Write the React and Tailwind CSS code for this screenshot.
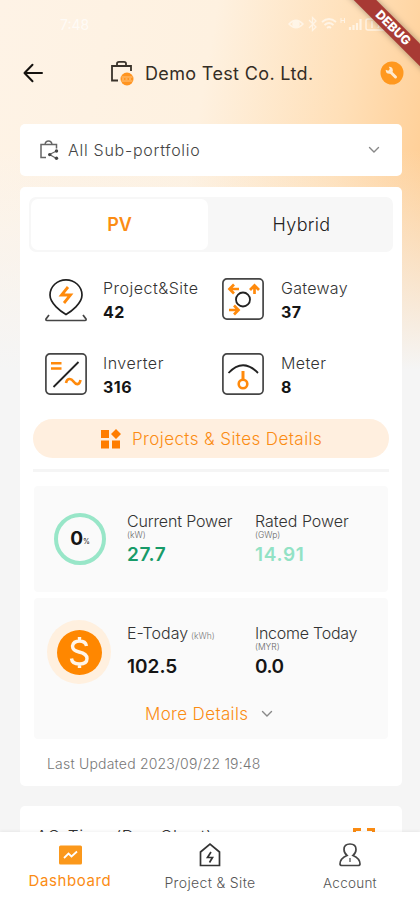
import React from "react";

const ORANGE = "#fb8c13";

function BackArrow() {
  return (
    <svg width="20" height="20" viewBox="0 0 20 20" fill="none" stroke="#15120f" strokeWidth="2" strokeLinecap="round" strokeLinejoin="round">
      <path d="M19 10H2M9.5 1.8 1.5 10l8 8.2" />
    </svg>
  );
}

function CompanyIcon() {
  return (
    <svg width="24" height="26" viewBox="0 0 24 26" fill="none">
      <path d="M8 20.5H2V6h19v5M7 6V3.6Q7 1.8 9 1.8h5q2 0 2 1.8V6" stroke="#3a332b" strokeWidth="1.8" />
      <circle cx="17" cy="19" r="6.5" fill="#ff9420" />
      <path d="M11.500 17h11M11.500 21h11" stroke="#ffc98a" strokeWidth=".9" />
      <path d="M12 19h10" stroke="#ffc98a" strokeWidth="1" strokeDasharray="2 1.500" />
    </svg>
  );
}

function PortfolioIcon() {
  return (
    <svg width="20" height="22" viewBox="0 0 20 22" fill="none" stroke="#666" strokeWidth="1.5">
      <path d="M7 18.500H2V5.500h15.500v4M6 5.500Q6.500 2 9.500 2t3.500 3.500" />
      <path d="m17.500 12-7 3.500 7 4" strokeWidth="1.200" />
      <g fill="#444" stroke="none">
        <circle cx="17.500" cy="12" r="1.700" />
        <circle cx="10.700" cy="15.600" r="1.700" />
        <circle cx="17.500" cy="19.300" r="1.700" />
      </g>
    </svg>
  );
}

function Chevron() {
  return (
    <svg width="12" height="8" viewBox="0 0 12 8" fill="none" stroke="#888" strokeWidth="1.4" strokeLinecap="round">
      <path d="m1.500 1.500 4.500 4.500 4.500-4.500" />
    </svg>
  );
}

function WrenchBadge() {
  return (
    <svg width="24" height="24" viewBox="0 0 24 24">
      <circle cx="12" cy="12" r="11.500" fill="#ff981f" />
      <path d="m10.500 11 5 5" stroke="#ffe9cd" strokeWidth="3" strokeLinecap="round" />
      <circle cx="9.300" cy="9.300" r="3.500" fill="#ffe9cd" />
      <path d="M5 5 8 4l1.800 4-1.500 1.800L4 8z" fill="#ff981f" />
    </svg>
  );
}

function StatusIcons() {
  return (
    <svg width="112" height="18" viewBox="0 0 112 18" fill="none" stroke="#fffaf2" strokeWidth="1.500" opacity=".75">
      <path d="M1 9Q8 1.500 15 9 8 16.500 1 9z" />
      <circle cx="8" cy="9" r="3" fill="#fffaf2" />
      <path d="m21 5 7 7-3.500 3.500V2.500L28 6l-7 7" strokeWidth="1.300" />
      <path d="M34 7q7-6 14 0M36.500 10q4.500-4 9 0M39 13q2-2 4 0" strokeWidth="1.800" />
      <path d="M53 3v5M56.500 3v5M53 5.500h3.500" strokeWidth="1" />
      <path d="M62 15v-3M65.500 15v-5M69 15V8M72.500 15V4" strokeWidth="2.200" />
      <rect x="78" y="4" width="26" height="11" rx="2" />
      <path d="M106 8v3M84 6v7M88 6h5l-3 7M97 6v7" />
    </svg>
  );
}

function SiteIcon() {
  return (
    <svg width="44" height="46" viewBox="0 0 44 46" fill="none">
      <path d="M22 36.500C17 33.500 6 25.500 6 17a16 15.200 0 0 1 32 0c0 8.500-11 16.500-16 19.500z" stroke="#202020" strokeWidth="1.700" />
      <path d="M5 37 2 41q-.5 1.500 1 1.500h38q1.500 0 1-1.500l-3-4" stroke="#454545" strokeWidth="1.700" />
      <path d="m24 9-6.500 8h9L20 25" stroke="#ff8a0c" strokeWidth="2.800" />
    </svg>
  );
}

function IconBox({ children }) {
  return (
    <svg width="42" height="42" viewBox="0 0 42 42" fill="none">
      <rect x=".9" y=".9" width="40.200" height="40.200" rx="4" stroke="#454545" strokeWidth="1.700" />
      {children}
    </svg>
  );
}

function GatewayIcon() {
  return (
    <IconBox>
      <circle cx="21" cy="21.500" r="7" stroke="#222" strokeWidth="1.800" />
      <g stroke="#ff8a0c" strokeWidth="2.700">
        <path d="M17 11H8M12 6.500 7.500 11l4.500 4.500M32.500 16V7.500M28 12l4.500-4.500L37 12M7 32h9M12 27.500l4.500 4.500-4.500 4.500" />
      </g>
    </IconBox>
  );
}

function InverterIcon() {
  return (
    <IconBox>
      <path d="M8.500 34 33.500 9" stroke="#222" strokeWidth="1.800" />
      <path d="M6 10.300h10.500M6 15.500h10.500" stroke="#ff8a0c" strokeWidth="2.400" />
      <path d="M21 30c1-5 5-5 7.500-1.500s6 4 7-1.500" stroke="#ff8a0c" strokeWidth="2.600" />
    </IconBox>
  );
}

function MeterIcon() {
  return (
    <IconBox>
      <path d="M6.500 20q14.500-15.500 29.500 0" stroke="#222" strokeWidth="1.800" />
      <path d="M21 18v9" stroke="#ff8a0c" strokeWidth="3" />
      <circle cx="21" cy="31" r="4.300" stroke="#ff8a0c" strokeWidth="2.600" />
    </IconBox>
  );
}

function Stat({ icon, label, value, labelClass }) {
  return (
    <div className="flex h-[75px] items-start">
      <div className="flex h-[44px] w-[44px] shrink-0 items-start justify-center">{icon}</div>
      <div className={"whitespace-nowrap " + labelClass}>
        <div className="h-[22px] text-[16px] leading-[21px] font-light text-[#333]">{label}</div>
        <div className="h-[24px] text-[16px] leading-[25px] font-bold text-[#151515]">{value}</div>
      </div>
    </div>
  );
}

function Metric({ label, unit, value, color, labelClass, inline }) {
  return (
    <div className="whitespace-nowrap">
      <div className={"h-[20px] text-[16px] leading-[20px] font-light text-[#333] " + labelClass}>
        {label}
        {inline && <span className="ml-[3px] text-[8.5px] tracking-normal text-[#777]">{unit}</span>}
      </div>
      <div className="h-[9px] text-[8.5px] leading-[8px] font-light text-[#666]">{inline ? "" : unit}</div>
      <div className={"pt-px text-[19px] leading-[28px] font-semibold " + color}>{value}</div>
    </div>
  );
}

export default function App() {
  return (
    <div className="relative flex h-[900px] w-[420px] flex-col overflow-hidden bg-[linear-gradient(to_bottom,transparent_0px,transparent_150px,#f5f5f5_370px),linear-gradient(100deg,#fef3e6_0%,#fef1e0_45%,#ffdfb7_75%,#ffc583_105%)] bg-[length:100%_100%,100%_370px] bg-no-repeat font-['Inter','Liberation_Sans',sans-serif]">
      <div className="flex h-[48px] shrink-0 items-center justify-between pl-[60px] pr-[20px] text-[14px] text-white/70">
        <span>7:48</span>
        <StatusIcons />
      </div>

      <header className="flex h-[50px] shrink-0 items-center pl-[23px] pr-[16px]">
        <BackArrow />
        <div className="ml-[67px]"><CompanyIcon /></div>
        <h1 className="ml-[11px] whitespace-nowrap pt-px text-[18px] tracking-[.35px] text-[#342d25]">Demo Test Co. Ltd.</h1>
        <div className="ml-auto"><WrenchBadge /></div>
      </header>

      <main className="flex min-h-0 flex-1 flex-col overflow-hidden pl-[20px] pr-[18px] pt-[26px]">
        <div className="flex h-[52px] shrink-0 items-center rounded-[5px] bg-white pl-[19px] pr-[22px]">
          <PortfolioIcon />
          <span className="ml-[9px] text-[16px] font-light tracking-[.72px] text-[#444]">All Sub-portfolio</span>
          <span className="ml-auto"><Chevron /></span>
        </div>

        <section className="mt-[11px] flex h-[599px] shrink-0 flex-col rounded-[5px] bg-white px-[9px] pt-[10px]">
          <div className="flex h-[55px] shrink-0 rounded-[7px] bg-[#f7f7f7] p-[2px]">
            <div className="flex w-[177px] items-center justify-center rounded-[7px] bg-white text-[18px] font-semibold text-[#fb8c13]">PV</div>
            <div className="flex flex-1 items-center justify-center pl-[4px] text-[18px] font-light tracking-[.3px] text-[#222]">Hybrid</div>
          </div>

          <div className="mt-[26px] grid h-[141px] shrink-0 grid-cols-[177px_1fr] pl-[15px]">
            <Stat icon={<SiteIcon />} label="Project&Site" value="42" labelClass="ml-[15px] tracking-[.5px]" />
            <Stat icon={<GatewayIcon />} label="Gateway" value="37" labelClass="ml-[16px] tracking-[.3px]" />
            <Stat icon={<InverterIcon />} label="Inverter" value="316" labelClass="ml-[15px] tracking-[.5px]" />
            <Stat icon={<MeterIcon />} label="Meter" value="8" labelClass="ml-[16px] tracking-[.4px]" />
          </div>

          <div className="mx-[4px] flex h-[39px] shrink-0 items-center justify-center rounded-full bg-[#ffefdf] text-[17px] text-[#fb8c13]">
            <svg className="ml-px" width="20" height="20" viewBox="0 0 20 20" fill="#ff7d00">
              <path d="M0 1h8v8H0zM0 11.500h8v8H0zM11 11.500h8v8h-8zM15 0l5 5-5 5-5-5z" />
            </svg>
            <span className="ml-[11px] pt-[2px] font-light tracking-[.42px]">Projects &amp; Sites Details</span>
          </div>
          <div className="mx-[4px] mt-[11px] h-[3px] shrink-0 bg-[#f5f5f5]" />

          <div className="mx-[5px] mt-[14px] grid h-[106px] shrink-0 grid-cols-[93px_128px_1fr] rounded-[4px] bg-[#fafafa] pt-[25px]">
            <div className="ml-[20px] mt-[2px] flex h-[52px] w-[52px] items-center justify-center rounded-full border-[4px] border-[#98e6c8] pt-px text-[19px] font-bold text-[#151515]">
              0<span className="mt-[5px] text-[7px] font-normal">%</span>
            </div>
            <Metric label="Current Power" unit="(kW)" value="27.7" color="tracking-[.6px] text-[#179b69]" labelClass="tracking-[-.15px]" />
            <Metric label="Rated Power" unit="(GWp)" value="14.91" color="tracking-[.7px] text-[#92e2c5]" labelClass="" />
          </div>

          <div className="mx-[5px] mt-[6px] flex h-[141px] shrink-0 flex-col rounded-[4px] bg-[#fafafa]">
            <div className="grid h-[103px] shrink-0 grid-cols-[93px_128px_1fr] pt-[25px]">
              <div className="-mt-[3px] ml-[13px] flex h-[64px] w-[64px] items-center justify-center rounded-full bg-[#fff0df]">
                <svg width="45" height="45" viewBox="0 0 45 45" fill="none">
                  <circle cx="22.500" cy="22.500" r="22.500" fill="#ff8700" />
                  <path d="M29.500 16q-1-5-7-5t-7 5q0 4.500 6.500 6 8 1.700 8 6.500 0 5.500-7.500 5.500t-8-5.500M22.500 7v4M22.500 34v4" stroke="#fff5e9" strokeWidth="3.400" />
                </svg>
              </div>
              <Metric label="E-Today" unit="(kWh)" inline value="102.5" color="text-[#151515]" labelClass="" />
              <Metric label="Income Today" unit="(MYR)" value="0.0" color="tracking-[-.5px] text-[#151515]" labelClass="tracking-[-.25px]" />
            </div>
            <div className="flex h-[26px] items-center pl-[111px] text-[17px] font-light text-[#fb8c13]">
              <span className="whitespace-nowrap pt-px tracking-[.35px]">More Details</span>
              <span className="ml-[13px]"><Chevron /></span>
            </div>
          </div>
          <div className="mt-[15px] h-[20px] whitespace-nowrap pl-[18px] text-[14px] leading-[20px] font-light tracking-[.2px] text-[#777]">Last Updated 2023/09/22 19:48</div>
        </section>

        <section className="mt-[20px] flex h-[80px] shrink-0 justify-between rounded-[5px] bg-white pl-[16px] pr-[27px] pt-[20px]">
          <h2 className="whitespace-nowrap text-[17px] leading-[23px] font-light tracking-[.65px] text-[#333]">AC-Time (Day Chart)</h2>
          <svg className="mt-px" width="22" height="22" viewBox="0 0 22 22" fill="none" stroke={ORANGE} strokeWidth="3">
            <path d="M1.500 7V2.500H8M14 2.500h6.500V7M1.500 15v5H8M14 20h6.500v-5" />
          </svg>
        </section>
      </main>

      <nav className="relative grid h-[68px] shrink-0 grid-cols-3 bg-white text-center shadow-[0_-1px_3px_rgba(0,0,0,0.06)]">
        <div className="flex flex-col items-center pt-[13px]">
          <svg width="23" height="20" viewBox="0 0 23 20" fill="none">
            <rect width="23" height="19" y=".5" rx="1.500" fill="#fb981b" />
            <path d="m5 13 4.500-4.500 3 3L18 6.500" stroke="#fff" strokeWidth="1.800" />
          </svg>
          <span className="mt-[6px] text-[15px] leading-[20px] tracking-[.6px] text-[#fb8c13]">Dashboard</span>
        </div>
        <div className="flex flex-col items-center pt-[10px]">
          <svg width="22" height="25" viewBox="0 0 22 25" fill="none" stroke="#333" strokeWidth="1.700">
            <path d="M1.500 23.500V10L11 2l9.500 8v13.500z" />
            <path d="m12 10-3.500 5.500h5l-3 5" strokeWidth="1.700" />
          </svg>
          <span className="mt-[6px] whitespace-nowrap text-[14px] leading-[20px] font-light tracking-[.35px] text-[#555]">Project &amp; Site</span>
        </div>
        <div className="flex flex-col items-center pt-[10px]">
          <svg width="22" height="25" viewBox="0 0 22 25" fill="none" stroke="#444" strokeWidth="1.700">
            <path d="M8 13.500Q5 11 5 7.500 5 2 11 2t6 5.500q0 3.500-3 6 7 3 7 8.500 0 1.500-2 1.500H3Q1 23.500 1 22q0-5.500 7-8.500z" />
            <path d="M11 16v4" strokeWidth="1.200" />
          </svg>
          <span className="mt-[6px] text-[13.5px] leading-[20px] font-light tracking-[.25px] text-[#555]">Account</span>
        </div>
      </nav>

      <div className="absolute right-[-33px] top-[20px] flex h-[16px] w-[120px] rotate-45 items-center justify-center bg-[#a83a34] text-[12.5px] font-extrabold text-white shadow-[0_0_6px_rgba(0,0,0,0.35)]">DEBUG</div>
    </div>
  );
}
